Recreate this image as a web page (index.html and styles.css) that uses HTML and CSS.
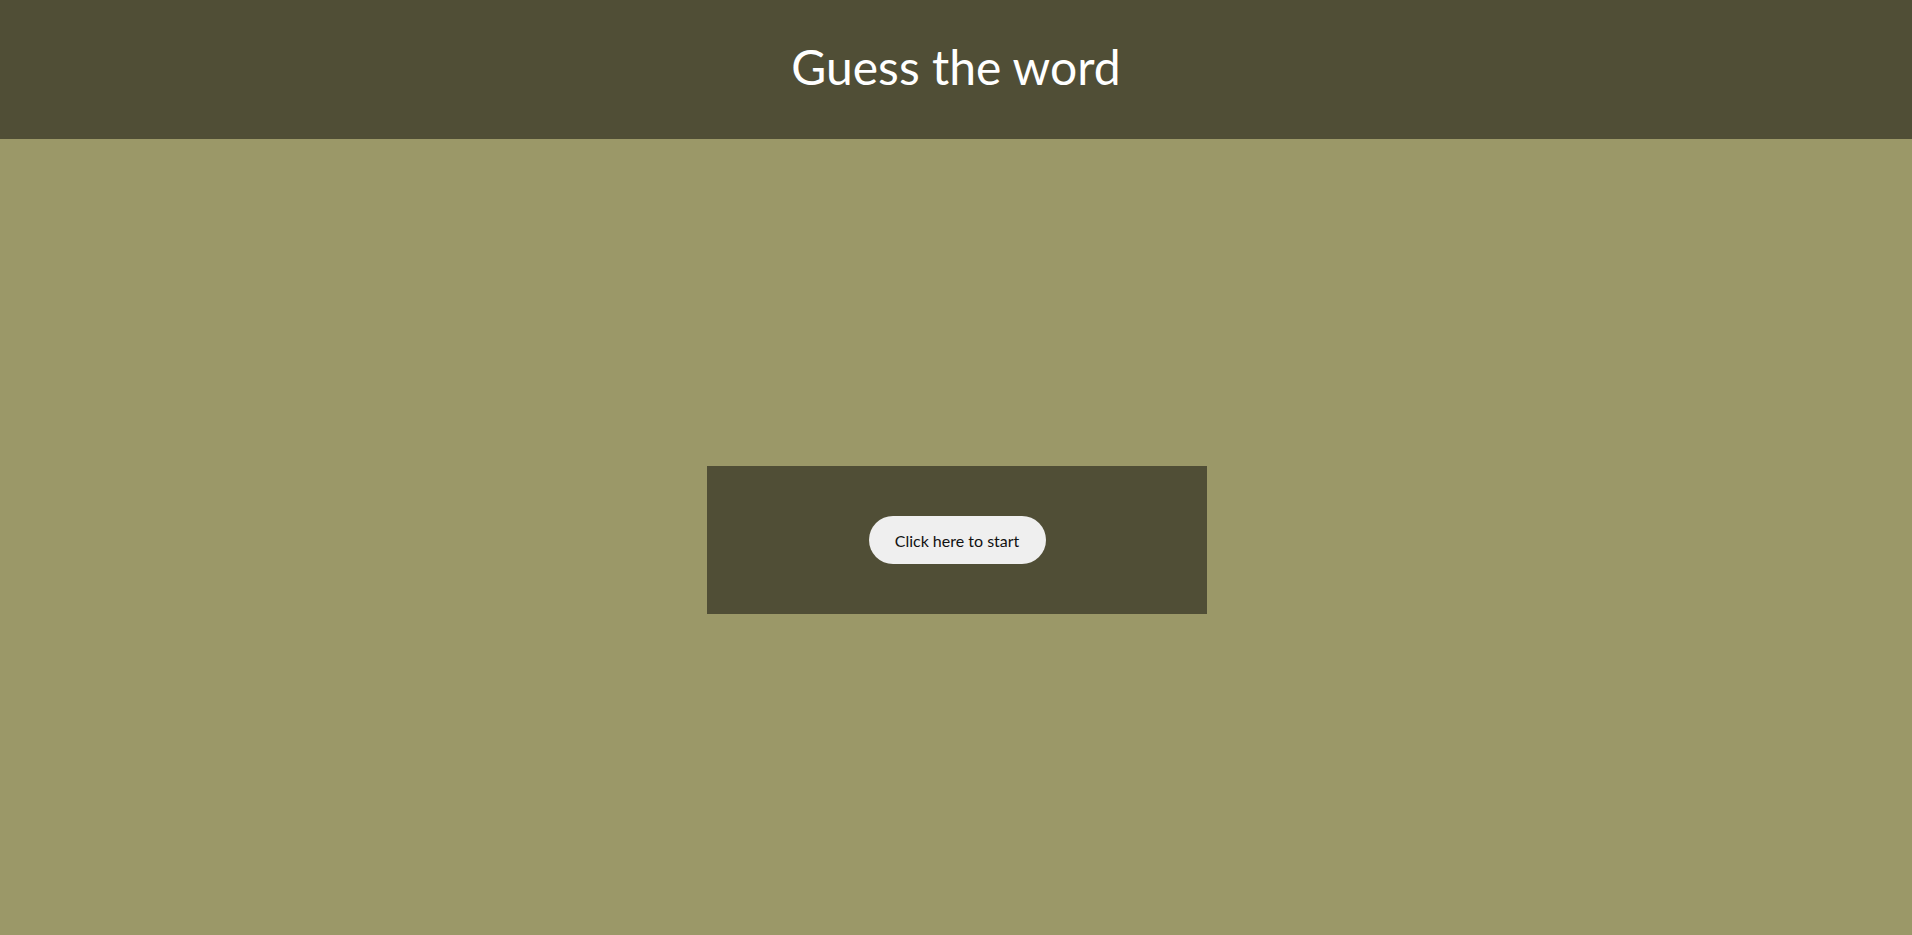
FILE: index.html
```html
<!DOCTYPE html>
<html lang="en">
<head>
<meta charset="utf-8">
<title>Guess the word</title>
<link rel="stylesheet" href="styles.css">
</head>
<body>
<header class="top">
  <h1 class="title">Guess the word</h1>
</header>
<main class="stage">
  <section class="panel">
    <button class="start-btn" type="button">Click here to start</button>
  </section>
</main>
</body>
</html>
```
FILE: styles.css
```css
html, body {
  margin: 0;
  padding: 0;
  height: 100%;
}
body {
  background: #9b9868;
  font-family: Lato, "Open Sans", sans-serif;
  display: flex;
  flex-direction: column;
}
.top {
  background: #504e36;
  height: 139px;
  display: flex;
  align-items: center;
  justify-content: center;
  flex-shrink: 0;
}
.title {
  margin: 0;
  color: #ffffff;
  font-weight: 400;
  font-size: 48px;
  line-height: 1;
  padding-bottom: 6px;
}
.stage {
  flex: 1;
  display: flex;
  align-items: center;
  justify-content: center;
  padding-top: 6px;
  padding-left: 2px;
}
.panel {
  background: #504e36;
  width: 500px;
  height: 148px;
  display: flex;
  align-items: center;
  justify-content: center;
}
.start-btn {
  background: #efefef;
  color: #111;
  border: none;
  border-radius: 24px;
  width: 177px;
  height: 48px;
  font-family: Lato, "Open Sans", sans-serif;
  font-size: 16px;
  cursor: pointer;
}
```
